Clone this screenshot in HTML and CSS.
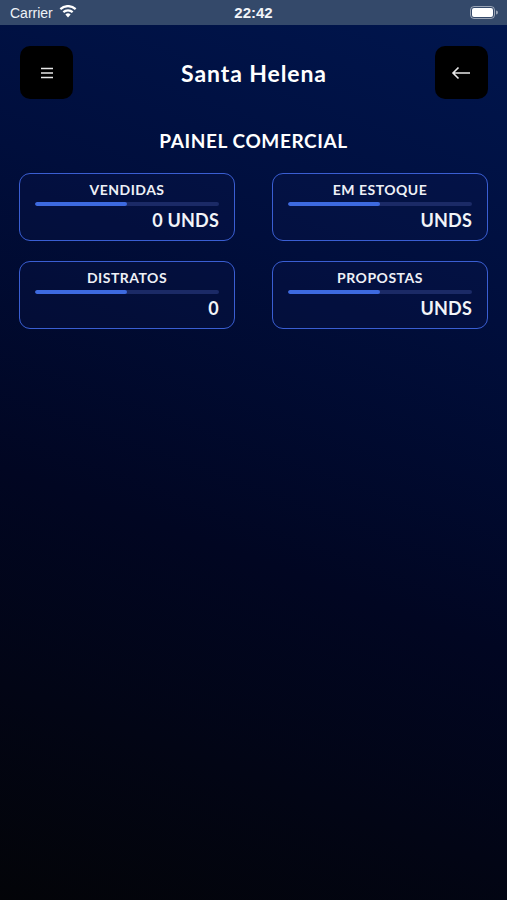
FILE: index.html
```html
<!DOCTYPE html>
<html lang="pt">
<head>
<meta charset="utf-8">
<link rel="stylesheet" href="styles.css">
</head>
<body>
<div class="screen">
  <div class="statusbar">
    <div class="sb-left">Carrier
      <svg class="wifi" width="18" height="13" viewBox="0 0 18 13"><path d="M9 12.5l2.6-3.1a4 4 0 0 0-5.2 0z" fill="#fff"/><path d="M3.6 6.3a8 8 0 0 1 10.8 0l-1.5 1.8a5.6 5.6 0 0 0-7.8 0z" fill="#fff"/><path d="M0.6 3.2a12.5 12.5 0 0 1 16.8 0l-1.5 1.8a10 10 0 0 0-13.8 0z" fill="#fff"/></svg>
    </div>
    <div class="sb-time">22:42</div>
    <div class="sb-right">
      <svg width="28" height="13" viewBox="0 0 28 13"><rect x="0.5" y="0.5" width="24" height="12" rx="3.5" fill="none" stroke="rgba(255,255,255,0.5)"/><rect x="2" y="2" width="21" height="9" rx="2" fill="#fff"/><path d="M26 4.5v4a2 2 0 0 0 0-4z" fill="rgba(255,255,255,0.5)"/></svg>
    </div>
  </div>
  <header class="topbar">
    <button class="icon-btn" aria-label="menu">
      <svg width="14" height="12" viewBox="0 0 14 12"><path d="M1 1.5h12M1 6h12M1 10.5h12" stroke="#e8e8e8" stroke-width="1.6"/></svg>
    </button>
    <h1 class="title">Santa Helena</h1>
    <button class="icon-btn" aria-label="voltar">
      <svg width="20" height="14" viewBox="0 0 20 14"><path d="M19 7H2M7.5 1.5L2 7l5.5 5.5" stroke="#e8e8e8" stroke-width="1.6" fill="none"/></svg>
    </button>
  </header>
  <h2 class="section">PAINEL COMERCIAL</h2>
  <div class="grid">
    <div class="card">
      <div class="label">VENDIDAS</div>
      <div class="track"><div class="fill" style="width:50%"></div></div>
      <div class="value">0 UNDS</div>
    </div>
    <div class="card">
      <div class="label">EM ESTOQUE</div>
      <div class="track"><div class="fill" style="width:50%"></div></div>
      <div class="value">UNDS</div>
    </div>
    <div class="card">
      <div class="label">DISTRATOS</div>
      <div class="track"><div class="fill" style="width:50%"></div></div>
      <div class="value">0</div>
    </div>
    <div class="card">
      <div class="label">PROPOSTAS</div>
      <div class="track"><div class="fill" style="width:50%"></div></div>
      <div class="value">UNDS</div>
    </div>
  </div>
</div>
</body>
</html>
```
FILE: styles.css
```css
* { box-sizing: border-box; }
html, body { margin: 0; padding: 0; }
body {
  font-family: "Lato", "Noto Sans", "DejaVu Sans", sans-serif;
  color: #fff;
  background: #000;
}
.screen {
  width: 507px;
  height: 900px;
  overflow: hidden;
  background: linear-gradient(200deg, #00164f 0%, #000e3c 30%, #010622 60%, #030408 100%);
}
.statusbar {
  height: 25px;
  background: #34496a;
  display: flex;
  align-items: center;
  justify-content: space-between;
  padding: 0 9px 0 10px;
  position: relative;
}
.sb-left {
  display: flex;
  align-items: center;
  gap: 6px;
  font-family: "Liberation Sans", "DejaVu Sans", sans-serif;
  font-size: 14px;
  color: #eef2f7;
}
.wifi { margin-top: -2px; }
.sb-time {
  position: absolute;
  left: 0;
  right: 0;
  text-align: center;
  font-family: "Liberation Sans", sans-serif;
  font-weight: 700;
  font-size: 15px;
  color: #f2f4f8;
  pointer-events: none;
}
.sb-right { display: flex; align-items: center; }
.topbar {
  display: flex;
  align-items: center;
  justify-content: space-between;
  padding: 21px 19px 0 20px;
}
.icon-btn {
  width: 53px;
  height: 53px;
  border: 0;
  border-radius: 10px;
  background: #000;
  display: flex;
  align-items: center;
  justify-content: center;
  padding: 0;
}
.title {
  margin: 0;
  font-size: 23px;
  font-weight: 700;
  letter-spacing: 0.9px;
}
.section {
  margin: 30px 0 20px;
  text-align: center;
  font-size: 19px;
  font-weight: 700;
  letter-spacing: 0.6px;
  line-height: 24px;
}
.grid {
  display: grid;
  grid-template-columns: 1fr 1fr;
  column-gap: 37px;
  row-gap: 20px;
  padding: 0 19px;
}
.card {
  height: 68px;
  border: 1.5px solid #3a5ed2;
  border-radius: 11px;
  background: rgba(10, 25, 80, 0.25);
  padding: 7px 15px 0;
  display: flex;
  flex-direction: column;
}
.label {
  text-align: center;
  font-size: 14px;
  font-weight: 700;
  line-height: 17px;
  letter-spacing: 0.5px;
  color: #eef0f6;
}
.track {
  height: 4px;
  margin-top: 4px;
  border-radius: 2px;
  background: #1b2a66;
  overflow: hidden;
}
.fill {
  height: 100%;
  background: #3d6ae0;
  border-radius: 2px;
}
.value {
  text-align: right;
  font-size: 18px;
  font-weight: 700;
  line-height: 22px;
  margin-top: 3px;
  letter-spacing: 0.2px;
  color: #f2f4f8;
}
```
